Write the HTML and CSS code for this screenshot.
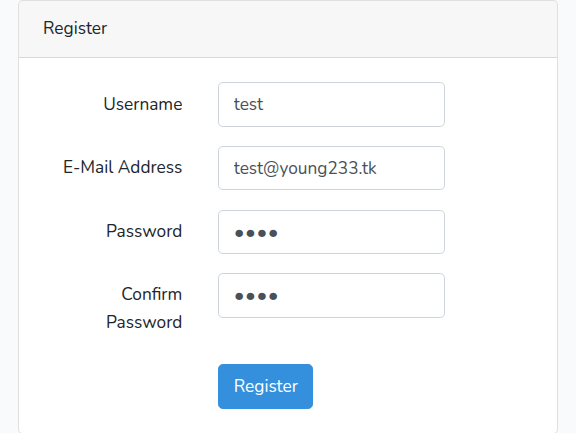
FILE: index.html
```html
<!DOCTYPE html>
<html lang="en">
<head>
<meta charset="utf-8">
<title>Register</title>
<link rel="stylesheet" href="styles.css">
</head>
<body>
<div class="card">
  <div class="card-header">Register</div>
  <div class="card-body">
    <form>
      <div class="row">
        <label class="label" for="name">Username</label>
        <div class="field"><input id="name" class="control" type="text" value="test"></div>
      </div>
      <div class="row">
        <label class="label" for="email">E-Mail Address</label>
        <div class="field"><input id="email" class="control" type="email" value="test@young233.tk"></div>
      </div>
      <div class="row">
        <label class="label" for="password">Password</label>
        <div class="field"><input id="password" class="control secret" type="password" value="test"></div>
      </div>
      <div class="row">
        <label class="label" for="password-confirm">Confirm Password</label>
        <div class="field"><input id="password-confirm" class="control secret" type="password" value="test"></div>
      </div>
      <div class="row last">
        <div class="label"></div>
        <div class="field"><button type="button" class="btn">Register</button></div>
      </div>
    </form>
  </div>
</div>
</body>
</html>
```
FILE: styles.css
```css
html {
  font-size: 19.2px;
}
* {
  box-sizing: border-box;
}
body {
  margin: 0;
  background: #f8fafc;
  font-family: "Nunito", "Lato", "Noto Sans", sans-serif;
  font-size: 0.9rem;
  line-height: 1.6;
  color: #212529;
}
.card {
  margin-left: 18px;
  width: 540px;
  background: #fff;
  border: 1px solid rgba(0, 0, 0, 0.125);
  border-radius: 0.25rem;
}
.card-header {
  padding: 0.75rem 1.25rem;
  background: rgba(0, 0, 0, 0.03);
  border-bottom: 1px solid rgba(0, 0, 0, 0.125);
  border-radius: calc(0.25rem - 1px) calc(0.25rem - 1px) 0 0;
}
.card-body {
  padding: 1.25rem;
}
.row {
  display: flex;
  margin: 0 -0.9375rem 1rem;
}
.row.last {
  margin-bottom: 0;
}
.label {
  flex: 0 0 33.3333%;
  max-width: 33.3333%;
  padding: calc(0.375rem + 1px) 0.9375rem;
  text-align: right;
}
.field {
  flex: 0 0 50%;
  max-width: 50%;
  padding: 0 0.9375rem;
}
.control {
  display: block;
  width: 100%;
  height: 44.4px;
  padding: 0.375rem 0.75rem;
  font: inherit;
  font-size: 0.9rem;
  line-height: 1.6;
  color: #495057;
  background: #fff;
  border: 1px solid #ced4da;
  border-radius: 0.25rem;
  outline: none;
}
.control.secret {
  font-size: 1.08rem;
  line-height: 1.2;
  letter-spacing: 0.5px;
}
.btn {
  display: inline-block;
  height: 44.8px;
  font: inherit;
  font-size: 0.9rem;
  line-height: 1.6;
  padding: 0.375rem 0.75rem;
  color: #fff;
  background: #3490dc;
  border: 1px solid #3490dc;
  border-radius: 0.25rem;
}
```
